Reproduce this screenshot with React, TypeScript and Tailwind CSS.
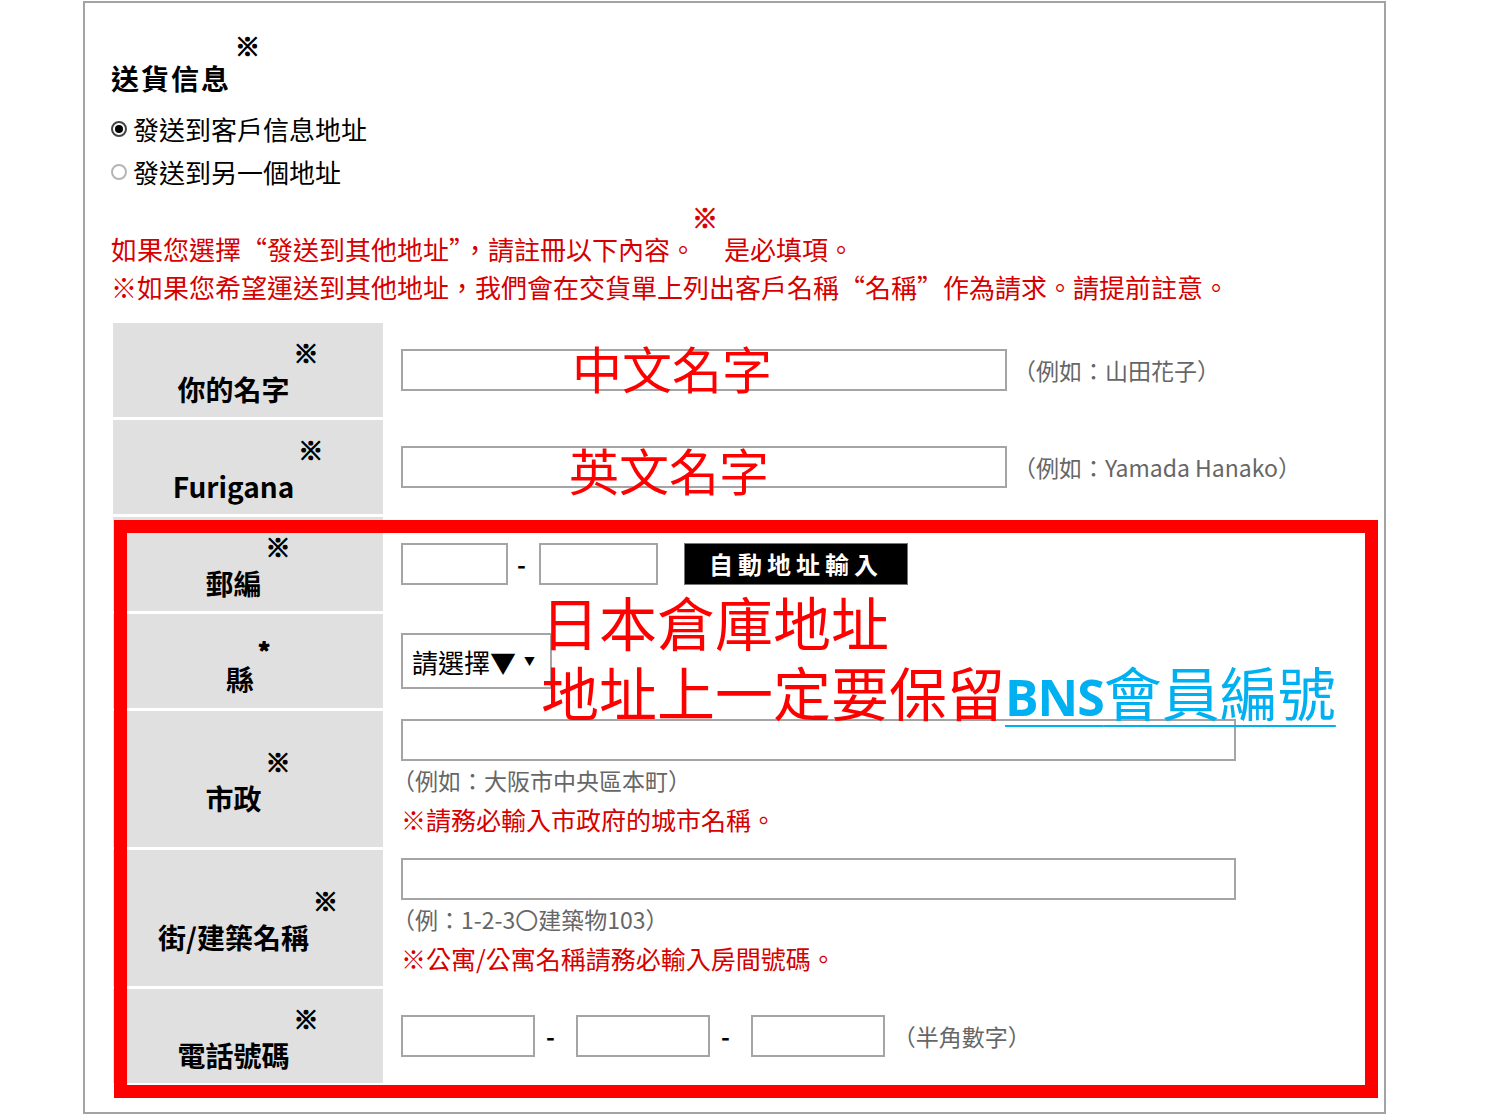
import React from "react";

const inputCls = "h-[42px] border-2 border-[#a5a5a5] bg-white outline-none";

function Label({ text, mark = "※", markCls = "-top-[38px] text-[25px]" }: { text: string; mark?: string; markCls?: string }) {
  return (
    <div className="bg-[#e0e0e0] flex items-center justify-center pt-[38px]">
      <span className="text-[28px] font-bold leading-[36px] text-black">
        {text}
        <span className={`relative ml-[4px] [-webkit-text-stroke:1.2px_black] ${markCls}`}>{mark}</span>
      </span>
    </div>
  );
}

function Dash({ wide = false }: { wide?: boolean }) {
  return (
    <span className={`${wide ? "ml-[11px] mr-[21px]" : "ml-[9px] mr-[13px]"} text-[24px] font-bold leading-none`}>-</span>
  );
}

export default function App() {
  return (
    <div className="min-h-[1115px] bg-white text-black font-['Noto_Sans_CJK_TC','Noto_Sans_CJK_JP',sans-serif]">
      <div className="relative ml-[83px] mt-[1px] w-[1303px] h-[1113px] border-2 border-[#a3a3a3] pl-[26px] pt-[58px]">
        <h2 className="text-[28px] leading-[34px] font-bold tracking-[2px]">
          送貨信息
          <span className="relative -top-[34px] ml-[4px] text-[25px] tracking-normal [-webkit-text-stroke:1.2px_black]">※</span>
        </h2>

        <div className="mt-[11px] text-[26px] leading-[43px]">
          <div className="flex items-center">
            <span className="w-[16px] h-[16px] rounded-full border-2 border-[#444] flex items-center justify-center mr-[6px]">
              <span className="w-[8px] h-[8px] rounded-full bg-black" />
            </span>
            發送到客戶信息地址
          </div>
          <div className="flex items-center">
            <span className="w-[16px] h-[16px] rounded-full border-2 border-[#b5b5b5] mr-[6px]" />
            發送到另一個地址
          </div>
        </div>

        <div className="mt-[37px] text-[26px] leading-[38px] text-[#d60000]">
          <p>
            如果您選擇“發送到其他地址”，請註冊以下內容。
            <span className="relative -top-[32px] ml-[-4px] mr-[6px] [-webkit-text-stroke:0.8px_#d60000]">※</span>
            是必填項。
          </p>
          <p>※如果您希望運送到其他地址，我們會在交貨單上列出客戶名稱“名稱”作為請求。請提前註意。</p>
        </div>

        <div className="mt-[17px] ml-[2px] w-[1253px] flex flex-col gap-[3px]">
          <div className="grid grid-cols-[270px_1fr] h-[94px]">
            <Label text="你的名字" />
            <div className="flex items-center pl-[18px]">
              <input className={`${inputCls} w-[606px]`} />
              <span className="ml-[6px] text-[23px] text-[#666]">（例如：山田花子）</span>
            </div>
          </div>

          <div className="grid grid-cols-[270px_1fr] h-[94px]">
            <Label text="Furigana" />
            <div className="flex items-center pl-[18px]">
              <input className={`${inputCls} w-[606px]`} />
              <span className="ml-[6px] text-[23px] text-[#666]">（例如：Yamada Hanako）</span>
            </div>
          </div>

          <div className="grid grid-cols-[270px_1fr] h-[94px]">
            <Label text="郵編" />
            <div className="flex items-center pl-[18px]">
              <input className={`${inputCls} w-[107px]`} />
              <Dash />
              <input className={`${inputCls} w-[119px]`} />
              <button className="ml-[26px] w-[224px] h-[42px] bg-black border border-[#777] text-white text-[24px] font-bold tracking-[5px]">
                自動地址輸入
              </button>
            </div>
          </div>

          <div className="grid grid-cols-[270px_1fr] h-[94px]">
            <Label text="縣" mark="*" markCls="-top-[30px] text-[24px]" />
            <div className="flex items-center pl-[18px]">
              <div className="w-[151px] h-[56px] border-2 border-[#a5a5a5] flex items-center pl-[9px] text-[26px]">
                請選擇▼
                <span className="ml-[8px] text-[11px]">▼</span>
              </div>
            </div>
          </div>

          <div className="grid grid-cols-[270px_1fr] h-[136px]">
            <Label text="市政" />
            <div className="flex flex-col items-start pl-[18px] pt-[8px]">
              <input className={`${inputCls} w-[835px] h-[41px]`} />
              <p className="-ml-[9px] text-[23px] leading-[38px] text-[#666]">（例如：大阪市中央區本町）</p>
              <p className="text-[25px] leading-[40px] text-[#d60000]">※請務必輸入市政府的城市名稱。</p>
            </div>
          </div>

          <div className="grid grid-cols-[270px_1fr] h-[136px]">
            <Label text="街/建築名稱" />
            <div className="flex flex-col items-start pl-[18px] pt-[8px]">
              <input className={`${inputCls} w-[835px] h-[41px]`} />
              <p className="-ml-[9px] text-[23px] leading-[38px] text-[#666]">（例：1-2-3〇建築物103）</p>
              <p className="text-[25px] leading-[40px] text-[#d60000]">※公寓/公寓名稱請務必輸入房間號碼。</p>
            </div>
          </div>

          <div className="grid grid-cols-[270px_1fr] h-[94px]">
            <Label text="電話號碼" />
            <div className="flex items-center pl-[18px]">
              <input className={`${inputCls} w-[134px]`} />
              <Dash wide />
              <input className={`${inputCls} w-[134px]`} />
              <Dash wide />
              <input className={`${inputCls} w-[134px]`} />
              <span className="ml-[8px] text-[23px] text-[#666]">（半角數字）</span>
            </div>
          </div>
        </div>

        {/* annotations drawn over the form */}
        <div className="absolute left-[29px] top-[517px] w-[1264px] h-[578px] border-[13px] border-[#ff0000] pointer-events-none" />
        <div className="absolute left-[487px] top-[339px] text-[50px] leading-none text-[#ff0000]">中文名字</div>
        <div className="absolute left-[484px] top-[441px] text-[50px] leading-none text-[#ff0000]">英文名字</div>
        <div className="absolute left-[456px] top-[583px] text-[58px] leading-[70px] text-[#ff0000] whitespace-nowrap">
          <p>日本倉庫地址</p>
          <p>
            地址上一定要保留
            <span className="text-[#00b0f0] underline decoration-2 underline-offset-[9px]">
              <span className="text-[50px] font-bold tracking-[-1px] font-['Open_Sans',sans-serif]">BNS</span>會員編號
            </span>
          </p>
        </div>
      </div>
    </div>
  );
}
